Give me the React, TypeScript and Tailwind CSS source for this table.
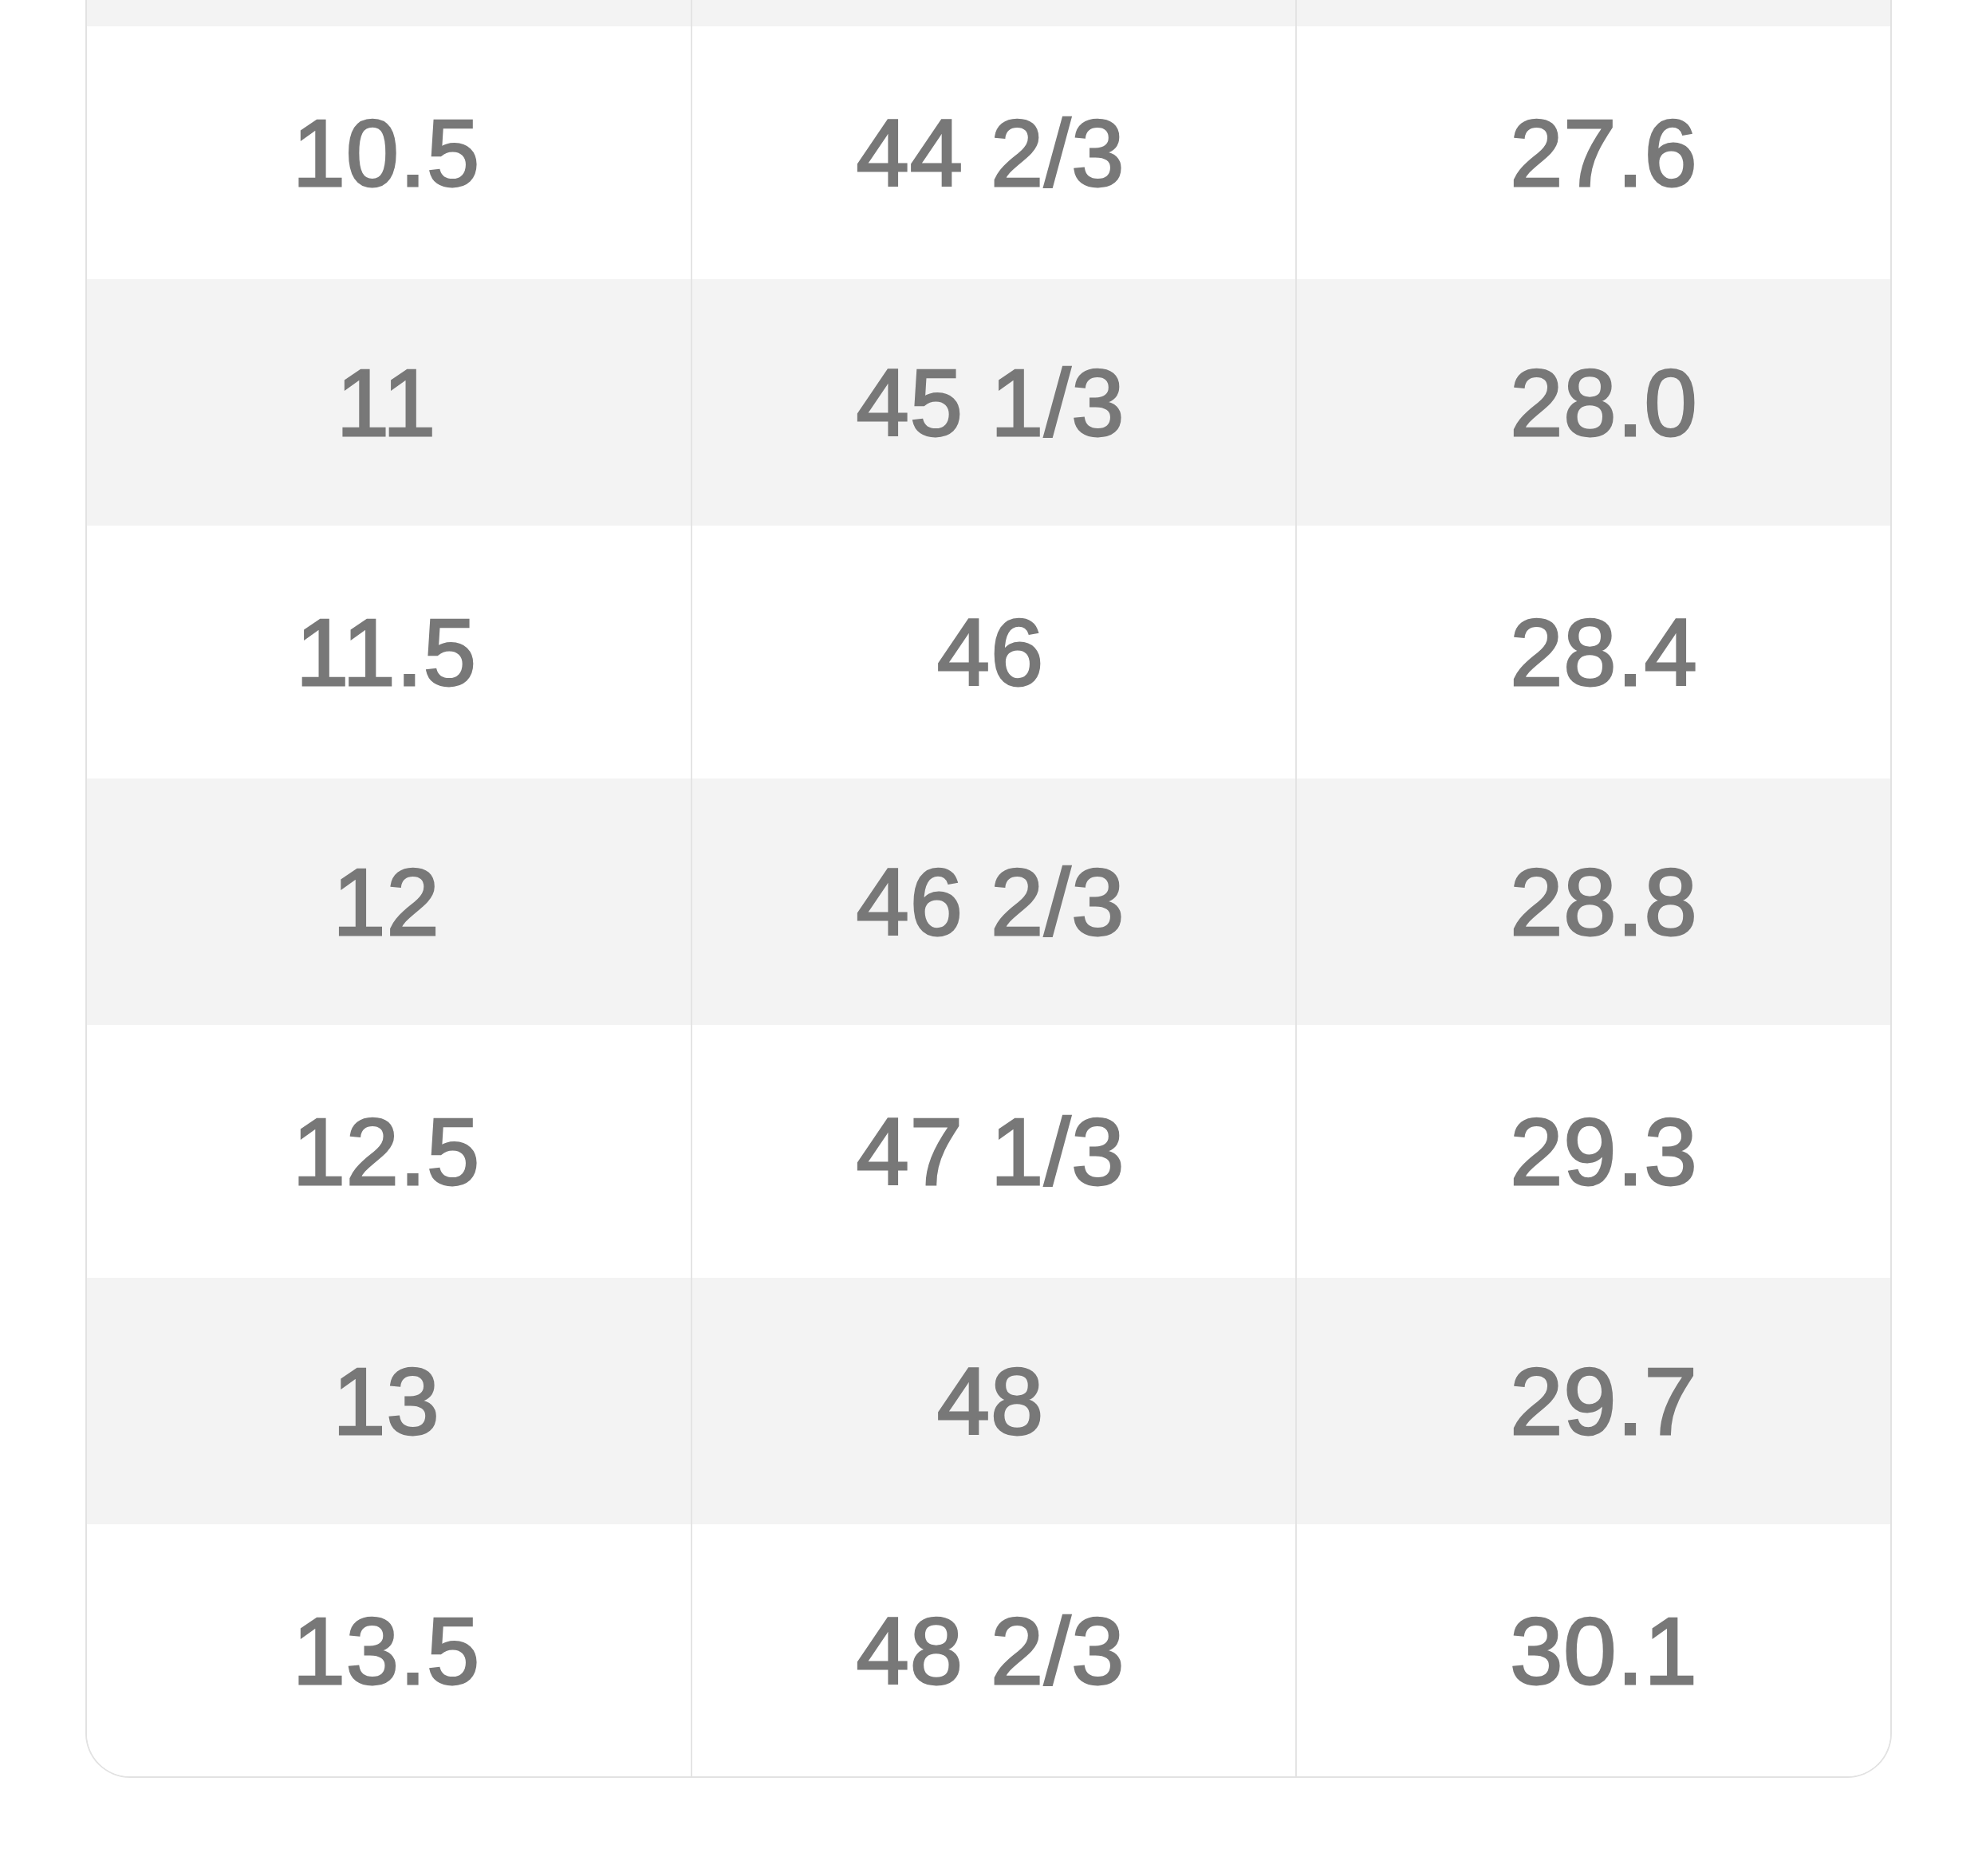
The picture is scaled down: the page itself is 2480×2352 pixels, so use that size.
const rows = [
  { us: '10.5', eu: '44 2/3', cm: '27.6' },
  { us: '11', eu: '45 1/3', cm: '28.0' },
  { us: '11.5', eu: '46', cm: '28.4' },
  { us: '12', eu: '46 2/3', cm: '28.8' },
  { us: '12.5', eu: '47 1/3', cm: '29.3' },
  { us: '13', eu: '48', cm: '29.7' },
  { us: '13.5', eu: '48 2/3', cm: '30.1' }
]

const SizeRow = ({ us, eu, cm, index }: { us: string; eu: string; cm: string; index: number }) => {
  const striped = index % 2 === 1
  const last = index === rows.length - 1
  const height = last ? 'h-[316px]' : striped ? 'h-[309px]' : 'h-[317px]'
  const bg = striped ? 'bg-[#f3f3f3]' : 'bg-white'

  return (
    <div className={`grid grid-cols-[759px_758px_1fr] ${height} ${bg}`}>
      <div className="flex items-center justify-center border-r-2 border-[#e4e4e4] pr-[6px]">{us}</div>
      <div className="flex items-center justify-center border-r-2 border-[#e4e4e4] pr-[8px]">{eu}</div>
      <div className="flex items-center justify-center pl-[26px]">{cm}</div>
    </div>
  )
}

export default function App() {
  return (
    <div className="w-[2480px] h-[2352px] bg-white pl-[107px]">
      <div
        className="w-[2265px] border-2 border-t-0 border-[#e2e2e2] rounded-b-[56px] overflow-hidden text-[119px] font-normal text-[#787878] leading-none tracking-[1px] [-webkit-text-stroke:2.75px_#787878]"
        style={{ fontFamily: '"Liberation Sans", Arial, sans-serif' }}
      >
        <div className="grid grid-cols-[759px_758px_1fr] h-[33px] bg-[#f3f3f3]">
          <div className="border-r-2 border-[#e4e4e4]"></div>
          <div className="border-r-2 border-[#e4e4e4]"></div>
          <div></div>
        </div>
        {rows.map((r, i) => (
          <SizeRow key={r.us} us={r.us} eu={r.eu} cm={r.cm} index={i} />
        ))}
      </div>
    </div>
  )
}
